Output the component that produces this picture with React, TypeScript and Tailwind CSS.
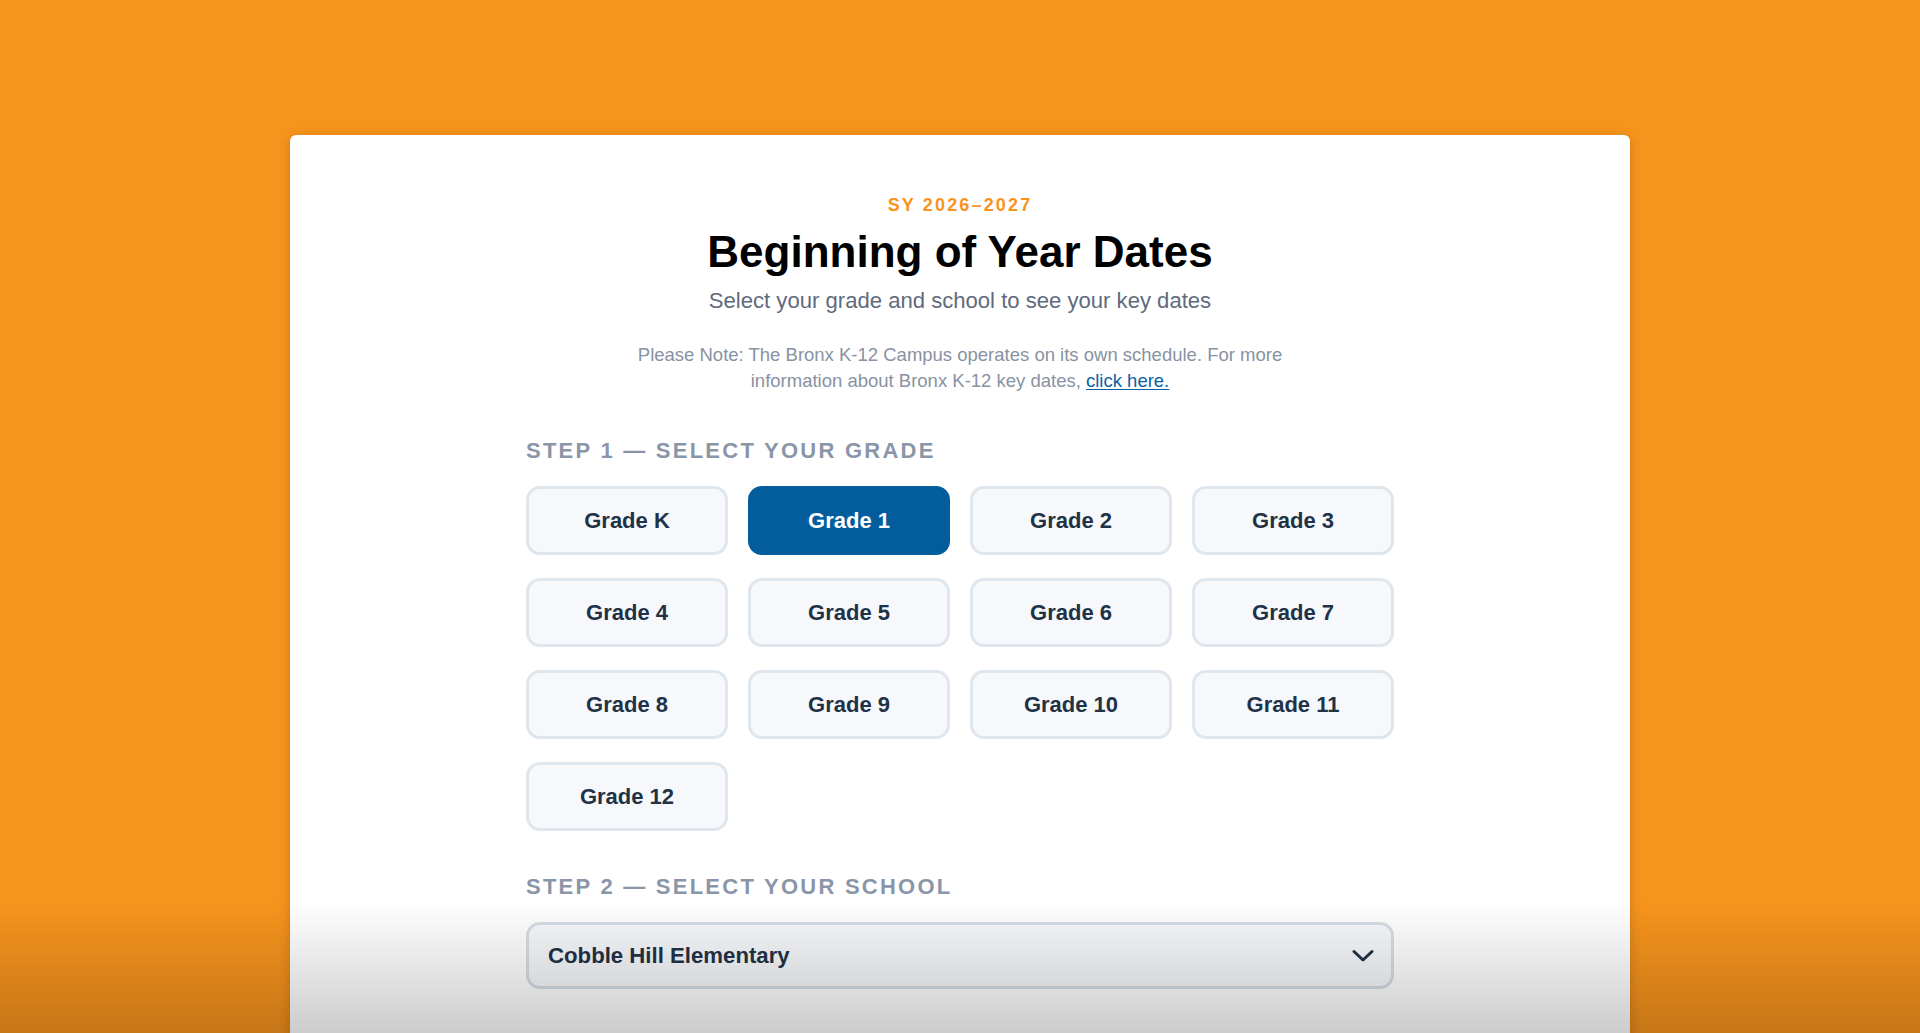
import React from "react";

const grades = [
  "Grade K",
  "Grade 1",
  "Grade 2",
  "Grade 3",
  "Grade 4",
  "Grade 5",
  "Grade 6",
  "Grade 7",
  "Grade 8",
  "Grade 9",
  "Grade 10",
  "Grade 11",
  "Grade 12",
];

export default function App() {
  const selected = "Grade 1";
  return (
    <div
      className="relative h-screen overflow-hidden bg-[#f7941d] pt-[135px]"
      style={{ fontFamily: '"Liberation Sans", Arial, Helvetica, sans-serif' }}
    >
      <div className="mx-auto w-[1340px] min-h-[1000px] rounded-md bg-white shadow-[0_2px_12px_rgba(0,0,0,0.18)] pt-[58px] pb-[80px]">
        <div className="flex flex-col items-center">
          <div className="text-[18px] leading-[24px] font-bold tracking-[0.12em] text-[#f7941d]">
            SY 2026–2027
          </div>
          <h1 className="mt-[9px] text-[44px] leading-[52px] font-bold text-black">
            Beginning of Year Dates
          </h1>
          <p className="mt-[8px] text-[22.1px] leading-[30px] text-[#5f6b7d]">
            Select your grade and school to see your key dates
          </p>
          <p className="mt-[26px] text-center text-[18.5px] leading-[26px] text-[#8792a2]">
            Please Note: The Bronx K-12 Campus operates on its own schedule. For more
            <br />
            information about Bronx K-12 key dates,{" "}
            <a href="#" className="text-[#0b5fa5] underline underline-offset-2">
              click here.
            </a>
          </p>
        </div>

        <div className="mx-auto w-[868px]">
          <div className="mt-[43px] text-[22px] leading-[28px] font-bold tracking-[0.102em] text-[#8a96a8]">
            STEP 1 — SELECT YOUR GRADE
          </div>
          <div className="mt-[21px] grid grid-cols-4 gap-x-[20px] gap-y-[23px]">
            {grades.map((g) => {
              const active = g === selected;
              return (
                <button
                  key={g}
                  className={
                    active
                      ? "flex h-[69px] items-center justify-center rounded-[14px] border-[3px] border-[#035d9c] bg-[#035d9c] text-[22px] font-bold text-white"
                      : "flex h-[69px] items-center justify-center rounded-[14px] border-[3px] border-[#dfe6ee] bg-[#f6f8fb] text-[22px] font-bold text-[#223246]"
                  }
                >
                  {g}
                </button>
              );
            })}
          </div>

          <div className="mt-[42px] text-[22px] leading-[28px] font-bold tracking-[0.102em] text-[#8a96a8]">
            STEP 2 — SELECT YOUR SCHOOL
          </div>
          <div className="mt-[21px] flex h-[67px] items-center justify-between rounded-[14px] border-[3px] border-[#d5dde6] bg-[#f6f8fb] pl-[19px] pr-[17px]">
            <span className="text-[22.2px] font-bold text-[#223246]">Cobble Hill Elementary</span>
            <svg width="22" height="14" viewBox="0 0 22 14" fill="none">
              <path
                d="M2 2.5L11 11L20 2.5"
                stroke="#223246"
                strokeWidth="3"
                strokeLinecap="round"
                strokeLinejoin="round"
              />
            </svg>
          </div>
        </div>
      </div>

      <div className="pointer-events-none absolute inset-x-0 bottom-0 h-[132px] bg-linear-to-b from-black/0 to-black/20" />
    </div>
  );
}
